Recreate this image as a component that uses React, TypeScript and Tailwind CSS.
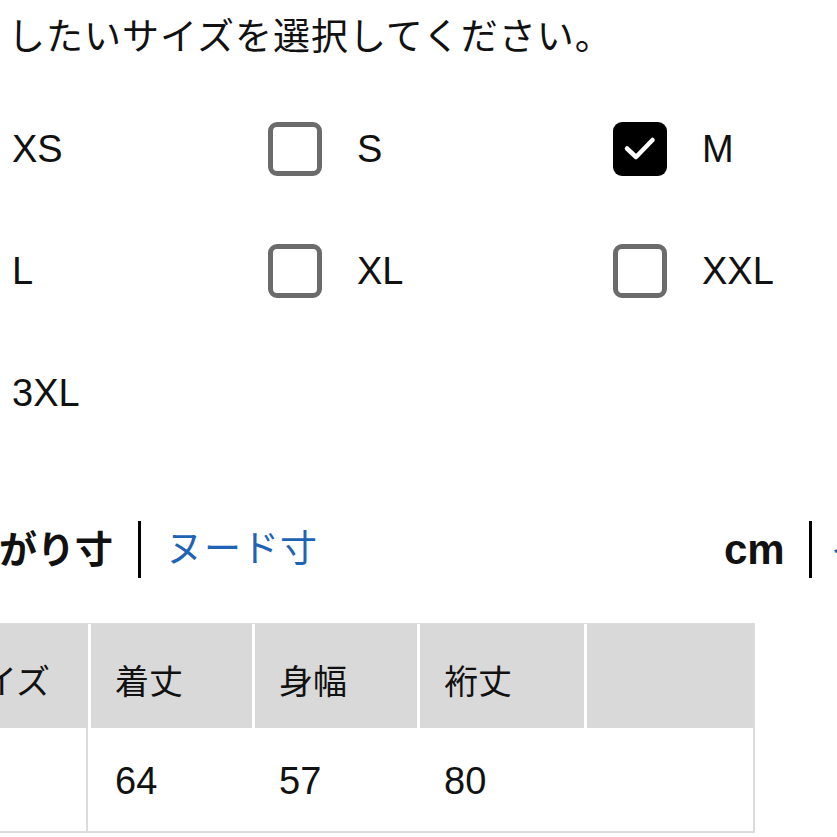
import React from "react";

const FONT = { fontFamily: '"Liberation Sans", "Noto Sans CJK JP", sans-serif' };

type Size = { label: string; checked: boolean } | null;

const rows: Size[][] = [
  [
    { label: "XS", checked: false },
    { label: "S", checked: false },
    { label: "M", checked: true },
  ],
  [
    { label: "L", checked: false },
    { label: "XL", checked: false },
    { label: "XXL", checked: false },
  ],
  [{ label: "3XL", checked: false }, null, null],
];

function Checkbox({ checked }: { checked: boolean }) {
  if (checked) {
    return (
      <div className="w-[54px] h-[54px] rounded-[9px] bg-black flex items-center justify-center shrink-0">
        <svg width="54" height="54" viewBox="0 0 54 54">
          <path
            d="M14 26.5 L23 35 L39.5 18"
            fill="none"
            stroke="white"
            strokeWidth="4.5"
            strokeLinecap="round"
            strokeLinejoin="round"
          />
        </svg>
      </div>
    );
  }
  return (
    <div className="w-[54px] h-[54px] rounded-[9px] border-[5px] border-[#6b6b6b] bg-white shrink-0" />
  );
}

const headers = ["サイズ", "着丈", "身幅", "裄丈", ""];
const values = ["", "64", "57", "80", ""];
const colW = ["w-[163px]", "w-[161px]", "w-[162px]", "w-[164px]", "w-[166px]"];

export default function App() {
  return (
    <div className="w-[837px] h-[837px] overflow-hidden bg-white text-[#111]" style={FONT}>
      {/* intro line */}
      <p className="pl-[8px] pt-[19px] text-[37px] leading-[38px] tracking-[1px] whitespace-nowrap">
        したいサイズを選択してください。
      </p>

      {/* size checkboxes */}
      <div className="-ml-[77px] mt-[65px] grid grid-cols-[345px_345px_345px] gap-y-[68px]">
        {rows.flat().map((s, i) =>
          s ? (
            <div key={i} className="flex items-center gap-[35px] h-[54px]">
              <Checkbox checked={s.checked} />
              <span className="text-[38px] leading-none">{s.label}</span>
            </div>
          ) : (
            <div key={i} className="h-[54px]" />
          )
        )}
      </div>

      {/* tabs */}
      <div className="-ml-[77px] mt-[101px] h-[57px] flex items-center whitespace-nowrap">
        <span className="shrink-0 text-[38px] font-bold leading-none">仕上がり寸</span>
        <div className="shrink-0 ml-[25px] w-[3px] h-[57px] bg-black" />
        <span className="shrink-0 ml-[25px] text-[37px] leading-none text-[#1f63b5] tracking-[1px]">
          ヌード寸
        </span>
        <span className="shrink-0 ml-[406px] text-[42px] font-bold leading-none">cm</span>
        <div className="shrink-0 ml-[24px] w-[3px] h-[57px] bg-black" />
        <span className="shrink-0 ml-[19px] text-[38px] leading-none text-[#1f63b5]">インチ</span>
      </div>

      {/* size table */}
      <div className="-ml-[77px] mt-[45px] w-[832px] border-2 border-t border-[#dcdcdc]">
        <div className="flex gap-[3px] h-[104px] bg-white">
          {headers.map((h, i) => (
            <div
              key={i}
              className={`${colW[i]} shrink-0 bg-[#d9d9d9] flex items-center pl-6 pt-3 text-[34px] whitespace-nowrap`}
            >
              {h}
            </div>
          ))}
        </div>
        <div className="flex gap-[3px] h-[103px]">
          {values.map((v, i) => (
            <div
              key={i}
              className={`${colW[i]} shrink-0 flex items-center pl-6 pt-1 text-[38px] ${
                i === 0 ? "border-r-2 border-[#dcdcdc]" : ""
              }`}
            >
              {v}
            </div>
          ))}
        </div>
      </div>
    </div>
  );
}
